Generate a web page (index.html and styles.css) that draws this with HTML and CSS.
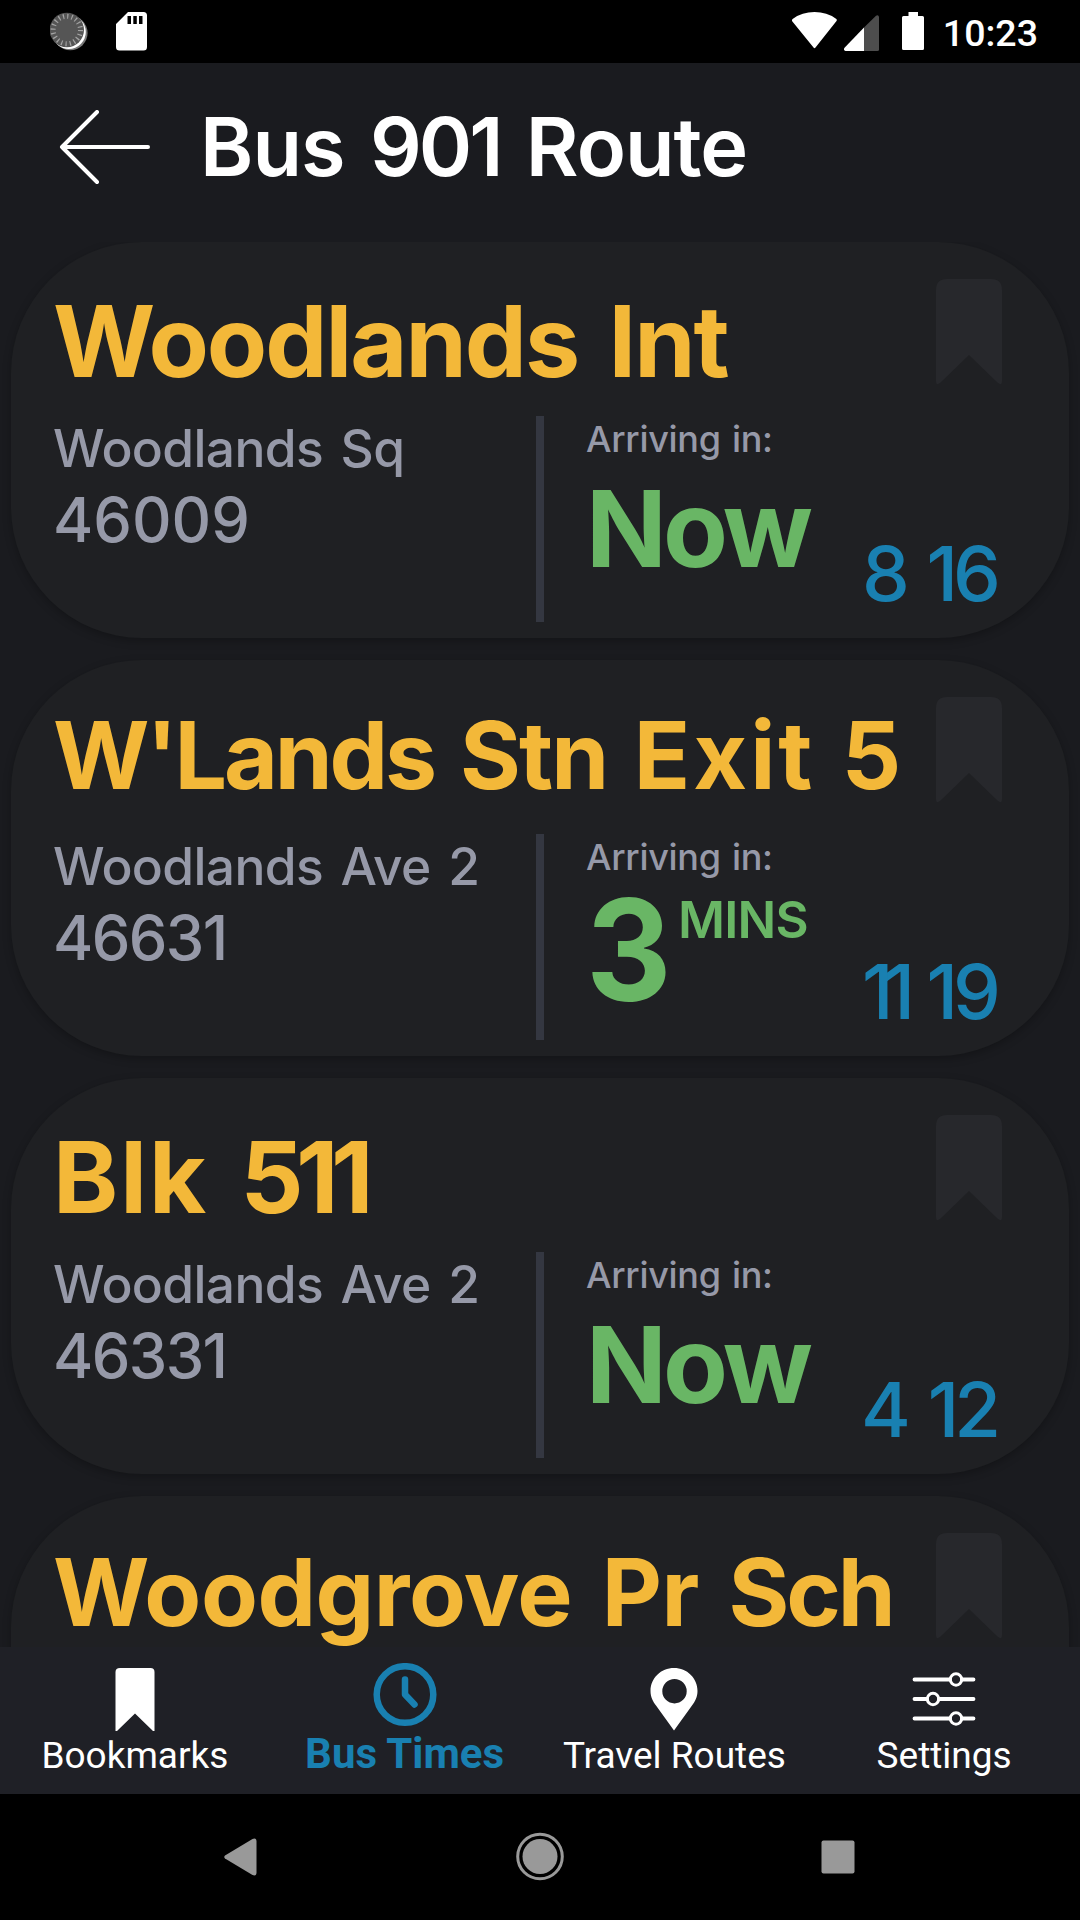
FILE: index.html
```html
<!DOCTYPE html>
<html lang="en">
<head>
<meta charset="utf-8">
<title>Bus 901 Route</title>
<link rel="stylesheet" href="styles.css">
</head>
<body>
<div class="screen">
  <header class="status">
    <div class="status-left">
      <svg width="40" height="40" viewBox="0 0 40 40">
        <circle cx="20.300" cy="21" r="17.300" fill="#777"/>
        <circle cx="18.800" cy="20" r="17" fill="#fff"/>
        <circle cx="16.800" cy="18" r="17.200" fill="#555"/>
        <circle cx="16.800" cy="18" r="13.700" fill="none" stroke="#a3a3a3" stroke-width="5" stroke-dasharray="1.2 3.104"/>
      </svg>
      <svg width="31" height="39" viewBox="0 0 31 39">
        <path fill="#fff" fill-rule="evenodd" d="M12 0H27.500Q31 0 31 3.500V35Q31 38.500 27.500 38.500H3.500Q0 38.500 0 35V12ZM11.500 4V12H15V4ZM17.300 4V12H20.800V4ZM23 4V12H26.500V4Z"/>
      </svg>
    </div>
    <div class="status-right">
      <svg width="45" height="37" viewBox="0 0 45 37"><path fill="#fff" d="M0 9Q-.3 7.600 1 6.700Q10 0 22.500 0T44 6.700Q45.300 7.600 44.500 9L23.500 35.500Q22.500 36.800 21.500 35.500Z"/></svg>
      <svg class="signal" width="35" height="36" viewBox="0 0 35 36"><path fill="#4d4d4d" d="M35 2Q34.500-.5 32 .7L20 12.500V36H33.500Q35 36 35 34.500Z"/><path fill="#fff" d="M20 12.500V36H1.500Q-.8 35.500 .3 33Z"/></svg>
      <svg class="battery" width="22" height="38" viewBox="0 0 22 38"><path fill="#fff" d="M6.500 0H16V4H20.500Q22 4 22 5.500V36.500Q22 38 20.500 38H1.500Q0 38 0 36.500V5.500Q0 4 1.500 4H6.500Z"/></svg>
      <span class="clock">10:23</span>
    </div>
  </header>

  <div class="toolbar">
    <svg width="92" height="76" viewBox="0 0 92 76"><path d="M38 2 3 37 38 72M3 37H89" fill="none" stroke="#fff" stroke-width="4" stroke-linecap="round" stroke-linejoin="round"/></svg>
    <h1>Bus <span class="service">901</span> Route</h1>
  </div>

  <main class="stops">
    <article class="card">
      <div class="card-head"><h2 class="name">Woodlands Int</h2>
        <svg class="mark" width="66" height="106" viewBox="0 0 66 106"><path d="M11 0H55Q66 0 66 11V102Q66 107 62 104L33 76 4 104Q0 107 0 102V11Q0 0 11 0Z"/></svg></div>
      <div class="card-body">
        <div class="place"><p class="road">Woodlands Sq</p><p class="code round">46009</p></div>
        <div class="arrival"><p class="label">Arriving in:</p>
          <div class="times"><strong class="now">Now</strong><div class="next"><span>8</span><span>16</span></div></div></div>
      </div>
    </article>
    <article class="card">
      <div class="card-head"><h2 class="name long"><span class="tight">W'Lands</span> Stn <span class="loose">Exit</span> 5</h2>
        <svg class="mark" width="66" height="106" viewBox="0 0 66 106"><path d="M11 0H55Q66 0 66 11V102Q66 107 62 104L33 76 4 104Q0 107 0 102V11Q0 0 11 0Z"/></svg></div>
      <div class="card-body">
        <div class="place"><p class="road">Woodlands Ave 2</p><p class="code">46631</p></div>
        <div class="arrival"><p class="label">Arriving in:</p>
          <div class="times"><strong class="count">3</strong><span class="unit">MINS</span><div class="next"><span class="ones">11</span><span>19</span></div></div></div>
      </div>
    </article>
    <article class="card">
      <div class="card-head"><h2 class="name block">Blk <span class="number">511</span></h2>
        <svg class="mark" width="66" height="106" viewBox="0 0 66 106"><path d="M11 0H55Q66 0 66 11V102Q66 107 62 104L33 76 4 104Q0 107 0 102V11Q0 0 11 0Z"/></svg></div>
      <div class="card-body">
        <div class="place"><p class="road">Woodlands Ave 2</p><p class="code">46331</p></div>
        <div class="arrival"><p class="label">Arriving in:</p>
          <div class="times"><strong class="now">Now</strong><div class="next"><span>4</span><span>12</span></div></div></div>
      </div>
    </article>
    <article class="card">
      <div class="card-head"><h2 class="name long wide">Woodgrove Pr <span class="tight">Sch</span></h2>
        <svg class="mark" width="66" height="106" viewBox="0 0 66 106"><path d="M11 0H55Q66 0 66 11V102Q66 107 62 104L33 76 4 104Q0 107 0 102V11Q0 0 11 0Z"/></svg></div>
    </article>
  </main>

  <nav class="tabs">
    <a class="tab">
      <svg width="64" height="64" viewBox="0 0 64 64"><path fill="#fff" d="M17 0H47.500Q51.500 0 51.500 4V63H50L32 45.500 14 63H12.500V4Q12.500 0 17 0Z"/></svg>
      <span>Bookmarks</span></a>
    <a class="tab active">
      <svg width="64" height="64" viewBox="0 0 64 64" fill="none" stroke="#1980b1" stroke-width="6.500"><circle cx="32" cy="31.500" r="28.300"/><path d="M32 16.500V31.500L41.500 41.500" stroke-linecap="round" stroke-linejoin="round"/></svg>
      <span>Bus Times</span></a>
    <a class="tab">
      <svg width="64" height="64" viewBox="0 0 64 64"><path fill="#fff" fill-rule="evenodd" d="M32 0C45 0 55.500 10 55.500 23C55.500 29 53 33.500 50 37.500L32 62.500 14 37.500C11 33.500 8.500 29 8.500 23C8.500 10 19 0 32 0ZM32.500 11A12.200 12.200 0 1 0 32.500 35.400A12.200 12.200 0 1 0 32.500 11Z"/></svg>
      <span>Travel Routes</span></a>
    <a class="tab">
      <svg width="64" height="64" viewBox="0 0 64 64" fill="none" stroke="#fff" stroke-width="3.800" stroke-linecap="round"><path d="M2.500 11.500H38M50 11.500H61.500M2.500 31H15M27 31H61.500M2.500 50.500H38M50 50.500H61.500"/><g stroke-width="3"><circle cx="44" cy="11.500" r="5.700"/><circle cx="21" cy="31" r="5.700"/><circle cx="44" cy="50.500" r="5.700"/></g></svg>
      <span>Settings</span></a>
  </nav>

  <footer class="system">
    <svg width="34" height="38" viewBox="0 0 34 38"><path fill="#999" d="M1 17.500 28.500 1Q32.500-.5 32.500 3.500V34.500Q32.500 38.500 28.500 37L1 20.500Q-.5 19 1 17.500Z"/></svg>
    <svg width="50" height="50" viewBox="0 0 50 50"><circle cx="25" cy="24.500" r="22.300" fill="none" stroke="#999" stroke-width="3"/><circle cx="25" cy="24.500" r="17.500" fill="#999"/></svg>
    <svg width="34" height="34" viewBox="0 0 34 34"><rect x=".5" y=".5" width="33" height="33" rx="2" fill="#999"/></svg>
  </footer>
</div>
</body>
</html>
```
FILE: styles.css
```css
* { box-sizing: border-box; margin: 0; padding: 0; }
body { background: #000; }
svg { display: block; flex: none; }

.screen {
  width: 1080px;
  height: 1920px;
  display: flex;
  flex-direction: column;
  overflow: hidden;
  background: #1a1b1f;
  font-family: Inter, sans-serif;
  white-space: nowrap;
}

/* status bar */
.status {
  flex: none;
  height: 63px;
  padding: 12px 42px 0 50px;
  display: flex;
  justify-content: space-between;
  background: #000;
  color: #fff;
}
.status-left { display: flex; gap: 26px; }
.status-right { display: flex; align-items: flex-start; }
.signal { margin: 3px 0 0 7px; }
.battery { margin-left: 23px; }
.clock { margin: -1px 0 0 19px; font: 500 37.5px/44px Roboto, sans-serif; }

/* page heading */
.toolbar {
  flex: none;
  height: 179px;
  padding: 47px 0 0 59px;
  display: flex;
  align-items: flex-start;
}
h1 {
  margin: -13px 0 0 49px;
  font-size: 81px;
  line-height: 100px;
  font-weight: 600;
  letter-spacing: -1px;
  word-spacing: 6px;
  color: #fff;
}
.service { letter-spacing: -3px; }

/* stop list */
.stops {
  flex: 1;
  min-height: 0;
  overflow: hidden;
  padding: 0 11px;
  display: flex;
  flex-direction: column;
  gap: 22px;
}
.card {
  flex: none;
  height: 396px;
  border-radius: 131px;
  background: #1f2023;
  box-shadow: 0 3px 8px rgba(0, 0, 0, .25);
}
.card-head {
  height: 174px;
  padding: 37px 67px 0 42px;
  display: flex;
  justify-content: space-between;
}
.name {
  margin-top: 2px;
  font-size: 98.600px;
  line-height: 120px;
  font-weight: 700;
  letter-spacing: -2px;
  word-spacing: 9px;
  color: #f3b839;
}
.long { margin-top: -2px; font-size: 93px; letter-spacing: -1.800px; word-spacing: 6px; }
.wide { margin-top: -1px; letter-spacing: -.5px; word-spacing: 8px; }
.tight { letter-spacing: -3.200px; }
.loose { letter-spacing: 3px; }
.block { letter-spacing: 2px; word-spacing: 7px; }
.number { letter-spacing: -7.500px; }
.mark { fill: #27282c; }

.card-body { display: flex; height: 206px; }
.place {
  width: 533px;
  padding: 4px 0 0 42px;
  border-right: 8px solid #343741;
  color: #9699a8;
  font-weight: 500;
}
.road { font-size: 51.500px; line-height: 56px; letter-spacing: -.650px; word-spacing: 4.500px; }
.code { margin-top: 8px; font-size: 61.400px; line-height: 72px; letter-spacing: -1.600px; }
.round { letter-spacing: 0; }
.arrival { flex: 1; padding: 1px 72px 0 42px; }
.label {
  font-size: 36px;
  line-height: 44px;
  font-weight: 500;
  letter-spacing: -.3px;
  word-spacing: 2px;
  color: #9699a8;
}
.times { display: flex; align-items: flex-start; color: #69b665; }
.now { margin-top: 12.500px; font-size: 106px; line-height: 110px; letter-spacing: -3.800px; }
.count {
  margin-top: 16px;
  width: 92px;
  font-size: 141px;
  line-height: 110px;
  transform: scaleX(.94);
  transform-origin: 0 50%;
}
.unit { margin-top: 12.500px; font-size: 51px; line-height: 56px; font-weight: 600; letter-spacing: -.8px; }
.next {
  margin: 74px 0 0 auto;
  display: grid;
  grid-template-columns: 43px 91px;
  padding-right: 1px;
  font-size: 76px;
  line-height: 76px;
  font-weight: 500;
  color: #1980b1;
}
.next span { display: flex; justify-content: center; letter-spacing: -5px; }
.next span:last-child { justify-content: flex-end; }
.next .ones { letter-spacing: -10px; }

/* bottom tabs */
.tabs {
  flex: none;
  height: 147px;
  padding: 21px 1px 0 0;
  display: grid;
  grid-template-columns: repeat(4, 1fr);
  background: #1f2026;
}
.tab {
  display: flex;
  flex-direction: column;
  align-items: center;
  gap: 2px;
  color: #fff;
  font: 400 37px/44px Roboto, sans-serif;
}
.active { margin-top: -5px; gap: 5px; color: #1980b1; font-weight: 700; font-size: 42px; }

/* system navigation */
.system {
  flex: none;
  height: 126px;
  padding: 0 225px 0 224px;
  display: flex;
  align-items: center;
  justify-content: space-between;
  background: #000;
}
```
